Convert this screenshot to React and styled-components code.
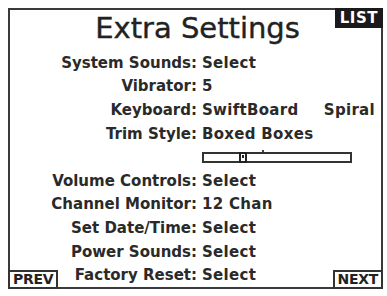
import React from "react"
import styled, { createGlobalStyle } from "styled-components"

const rows = [
  { label: "System Sounds:", value: "Select" },
  { label: "Vibrator:", value: "5" },
  { label: "Keyboard:", value: "SwiftBoard", extra: "Spiral" },
  { label: "Trim Style:", value: "Boxed Boxes" },
  { slider: true, pos: 35 },
  { label: "Volume Controls:", value: "Select" },
  { label: "Channel Monitor:", value: "12 Chan" },
  { label: "Set Date/Time:", value: "Select" },
  { label: "Power Sounds:", value: "Select" },
  { label: "Factory Reset:", value: "Select" },
]

export default function App() {
  return (
    <Screen>
      <GlobalStyle />
      <Frame>
        <Title>Extra Settings</Title>
        <Badge>LIST</Badge>
        <List>
          {rows.map((r, i) =>
            r.slider ? (
              <Row key={i}>
                <span />
                <Track>
                  <Tick />
                  <Knob style={{ left: r.pos }} />
                </Track>
              </Row>
            ) : (
              <Row key={i}>
                <Label>{r.label}</Label>
                <Value>
                  {r.value}
                  {r.extra && <Extra>{r.extra}</Extra>}
                </Value>
              </Row>
            )
          )}
        </List>
        <SoftKey $side="left">PREV</SoftKey>
        <SoftKey $side="right">NEXT</SoftKey>
      </Frame>
    </Screen>
  )
}

const GlobalStyle = createGlobalStyle`
  body {
    margin: 0;
    background: #fff;
    font-family: "DejaVu Sans", sans-serif;
    color: #262626;
  }
`

const Screen = styled.div`
  width: 387px;
  height: 296px;
  padding: 8px 4px 7px 8px;
  box-sizing: border-box;
  background: #fff;
`

const Frame = styled.div`
  position: relative;
  height: 100%;
  border: 2px solid #3a3a3a;
  box-sizing: border-box;
  display: flex;
  flex-direction: column;
`

const Title = styled.h1`
  margin: 0;
  padding-top: 1px;
  padding-left: 4px;
  font-size: 29px;
  font-weight: 400;
  line-height: 34px;
  text-align: center;
  color: #222;
  -webkit-text-stroke: 0.4px #222;
`

const Badge = styled.div`
  position: absolute;
  top: -2px;
  right: -2px;
  background: #1a1a1a;
  color: #fff;
  font-weight: 700;
  font-size: 15px;
  line-height: 20px;
  padding: 0 5px;
  letter-spacing: 0.5px;
`

const List = styled.div`
  display: flex;
  flex-direction: column;
  margin-top: 6px;
`

const Row = styled.div`
  display: grid;
  grid-template-columns: 187px 1fr;
  column-gap: 5px;
  height: 23.6px;
  align-items: center;
  font-size: 15px;
  font-weight: 700;
  color: #2a2a2a;
`

const Label = styled.span`
  text-align: right;
  white-space: nowrap;
`

const Value = styled.span`
  display: flex;
  white-space: nowrap;
  letter-spacing: 0.3px;
`

const Extra = styled.span`
  margin-left: auto;
  margin-right: 6px;
`

const Track = styled.div`
  position: relative;
  width: 150px;
  height: 11px;
  border: 2px solid #333;
  box-sizing: border-box;
`

const Knob = styled.div`
  position: absolute;
  top: -2px;
  width: 8px;
  height: 11px;
  border: 2px solid #222;
  box-sizing: border-box;
  &::after {
    content: "";
    position: absolute;
    left: 1px;
    top: 1px;
    width: 2px;
    height: 3px;
    background: #222;
  }
`

const Tick = styled.div`
  position: absolute;
  left: 58px;
  top: -4px;
  width: 2px;
  height: 2px;
  background: #444;
`

const SoftKey = styled.div`
  position: absolute;
  bottom: -2px;
  ${(p) => (p.$side === "left" ? "left: -2px;" : "right: -2px;")}
  border: 2px solid #333;
  background: #fff;
  font-size: 14px;
  font-weight: 700;
  line-height: 15px;
  padding: 0 3px;
  letter-spacing: -0.3px;
  color: #222;
`
